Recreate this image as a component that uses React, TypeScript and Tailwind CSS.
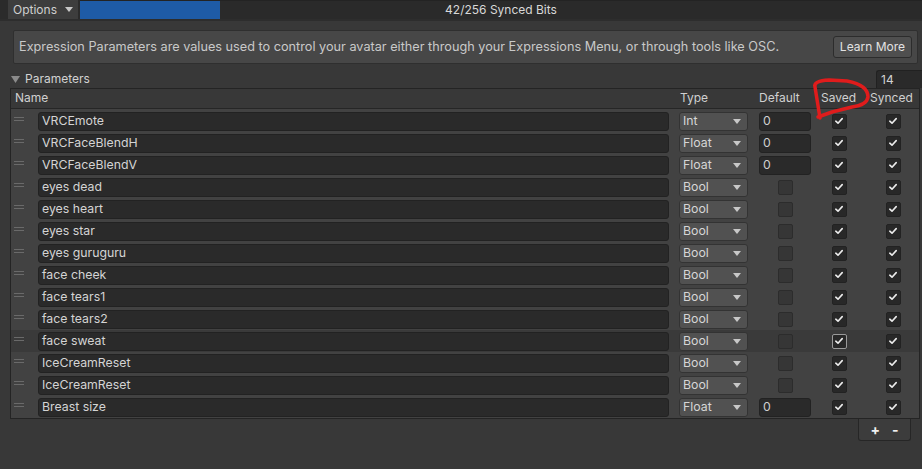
import React from "react";

type Row = { name: string; type: string; def?: string; sel?: boolean };

const rows: Row[] = [
  { name: "VRCEmote", type: "Int", def: "0" },
  { name: "VRCFaceBlendH", type: "Float", def: "0" },
  { name: "VRCFaceBlendV", type: "Float", def: "0" },
  { name: "eyes dead", type: "Bool" },
  { name: "eyes heart", type: "Bool" },
  { name: "eyes star", type: "Bool" },
  { name: "eyes guruguru", type: "Bool" },
  { name: "face cheek", type: "Bool" },
  { name: "face tears1", type: "Bool" },
  { name: "face tears2", type: "Bool" },
  { name: "face sweat", type: "Bool", sel: true },
  { name: "IceCreamReset", type: "Bool" },
  { name: "IceCreamReset", type: "Bool" },
  { name: "Breast size", type: "Float", def: "0" },
];

function Check({ focus }: { focus?: boolean }) {
  return (
    <div
      className={
        "w-[15px] h-[15px] rounded-[2px] bg-[#282828] border flex items-center justify-center " +
        (focus ? "border-[#9a9a9a]" : "border-[#222222]")
      }
    >
      <svg width="10" height="10" viewBox="0 0 10 10">
        <polyline points="1.8,5.2 4,7.2 8.2,2.6" fill="none" stroke="#ececec" strokeWidth="1.6" strokeLinecap="round" strokeLinejoin="round" />
      </svg>
    </div>
  );
}

function Arrow() {
  return (
    <svg width="8" height="5" viewBox="0 0 8 5">
      <polygon points="0,0 8,0 4,5" fill="#c8c8c8" />
    </svg>
  );
}

export default function App() {
  return (
    <div
      className="w-[922px] h-[469px] bg-[#383838] overflow-hidden relative text-[12px] text-[#d2d2d2]"
      style={{ fontFamily: "Inter, 'Noto Sans', sans-serif" }}
    >
      {/* top bar */}
      <div className="flex h-[19px] bg-[#2b2b2b]">
        <div className="w-[8px]" />
        <div className="w-[70px] bg-[#3d3d3d] flex items-center pl-[5px] gap-[8px] text-[#cfcfcf]">
          <span>Options</span>
          <Arrow />
        </div>
        <div className="w-[2px]" />
        <div className="flex-1 relative bg-[#2a2a2a] border-t border-[#232323]">
          <div className="absolute left-0 top-0 bottom-0 w-[140px] bg-[#1e5ba6]" />
          <div className="absolute inset-0 flex items-center justify-center text-[#d8d8d8]">42/256 Synced Bits</div>
        </div>
      </div>
      <div className="h-[2px] bg-[#2d2d2d]" />

      {/* help box */}
      <div className="ml-[13px] mr-[4px] mt-[9px] h-[34px] bg-[#474747] border border-[#2f2f2f] rounded-[2px] flex items-center pl-[5px] pr-[5px]">
        <span className="flex-1 text-[#c9c9c9] text-[12.7px]">
          Expression Parameters are values used to control your avatar either through your Expressions Menu, or through tools like OSC.
        </span>
        <div className="h-[22px] px-[6px] bg-[#4f4f4f] border border-[#2c2c2c] rounded-[3px] flex items-center text-[#e2e2e2]">
          Learn More
        </div>
      </div>

      {/* foldout */}
      <div className="flex items-end h-[19px] mt-[5px]">
        <div className="flex items-center h-[18px] pl-[11px] gap-[5px] flex-1">
          <svg width="9" height="7" viewBox="0 0 9 7">
            <polygon points="0,0 9,0 4.5,7" fill="#8b8b8b" />
          </svg>
          <span>Parameters</span>
        </div>
        <div className="w-[46px] h-[18px] bg-[#2a2a2a] border-t border-l border-[#212121] rounded-tl-[3px] pl-[4px] flex items-center text-[#d2d2d2]">
          14
        </div>
      </div>

      {/* table */}
      <div className="ml-[10px] mr-[2px] border border-[#242424] bg-[#414141]">
        <div className="h-[20px] pb-[2px] bg-[#383838] border-b border-[#262626] flex items-center text-[#d0d0d0]">
          <div className="pl-[4px] flex-1">Name</div>
          <div className="w-[80px] pl-[1px]">Type</div>
          <div className="w-[61px]">Default</div>
          <div className="w-[49px] pl-[1px]">Saved</div>
          <div className="w-[50px] pl-[1px]">Synced</div>
        </div>
        <div className="flex flex-col pt-[1px] bg-[#424242]">
          {rows.map((r, i) => (
            <div
              key={i}
              className={"h-[22px] flex items-center " + (r.sel ? "bg-[#3a3a3a]" : "bg-[#424242]")}
            >
              <div className="w-[27px] h-full flex items-start justify-start pl-[3px] pt-[7px]">
                <div className="flex flex-col gap-[2px]">
                  <div className="w-[10px] h-[1px] bg-[#6a6a6a]" />
                  <div className="w-[10px] h-[1px] bg-[#6a6a6a]" />
                </div>
              </div>
              <div className="flex-1 h-[19px] bg-[#2a2a2a] border border-[#222222] rounded-[3px] flex items-center pl-[3px] text-[#d4d4d4] text-[12.3px]">
                {r.name}
              </div>
              <div className="w-[10px]" />
              <div className="w-[69px] h-[19px] bg-[#515151] border border-[#333333] rounded-[3px] flex items-center justify-between pl-[3px] pr-[6px] text-[#d6d6d6] text-[12.3px]">
                <span>{r.type}</span>
                <Arrow />
              </div>
              <div className="w-[11px]" />
              <div className="w-[52px] flex justify-center">
                {r.def !== undefined ? (
                  <div className="w-[52px] h-[19px] bg-[#2a2a2a] border border-[#222222] rounded-[3px] flex items-center pl-[3px] text-[#cfcfcf] text-[12.3px]">
                    {r.def}
                  </div>
                ) : (
                  <div className="w-[15px] h-[15px] rounded-[2px] bg-[#363636] border border-[#2c2c2c]" />
                )}
              </div>
              <div className="w-[56px] flex justify-center">
                <Check focus={r.sel} />
              </div>
              <div className="w-[52px] flex justify-center">
                <Check />
              </div>
            </div>
          ))}
        </div>
      </div>

      {/* footer +/- */}
      <div className="flex justify-end mr-[11px]">
        <div className="w-[53px] h-[22px] bg-[#3c3c3c] border border-t-0 border-[#262626] rounded-b-[3px] flex items-center justify-center gap-[12px] text-[#f0f0f0] font-bold text-[14px]">
          <span>+</span>
          <span>-</span>
        </div>
      </div>

      {/* red annotation */}
      <svg className="absolute left-0 top-0 pointer-events-none" width="922" height="469" viewBox="0 0 922 469">
        <path
          d="M 820 118 L 815 87 Q 813 81 829 80 L 847 81 Q 868 85 868 97 Q 867 105 852 107 L 832 112 L 818 117"
          fill="none"
          stroke="#e01c1c"
          strokeWidth="3.5"
          strokeLinecap="round"
          strokeLinejoin="round"
        />
      </svg>
    </div>
  );
}
